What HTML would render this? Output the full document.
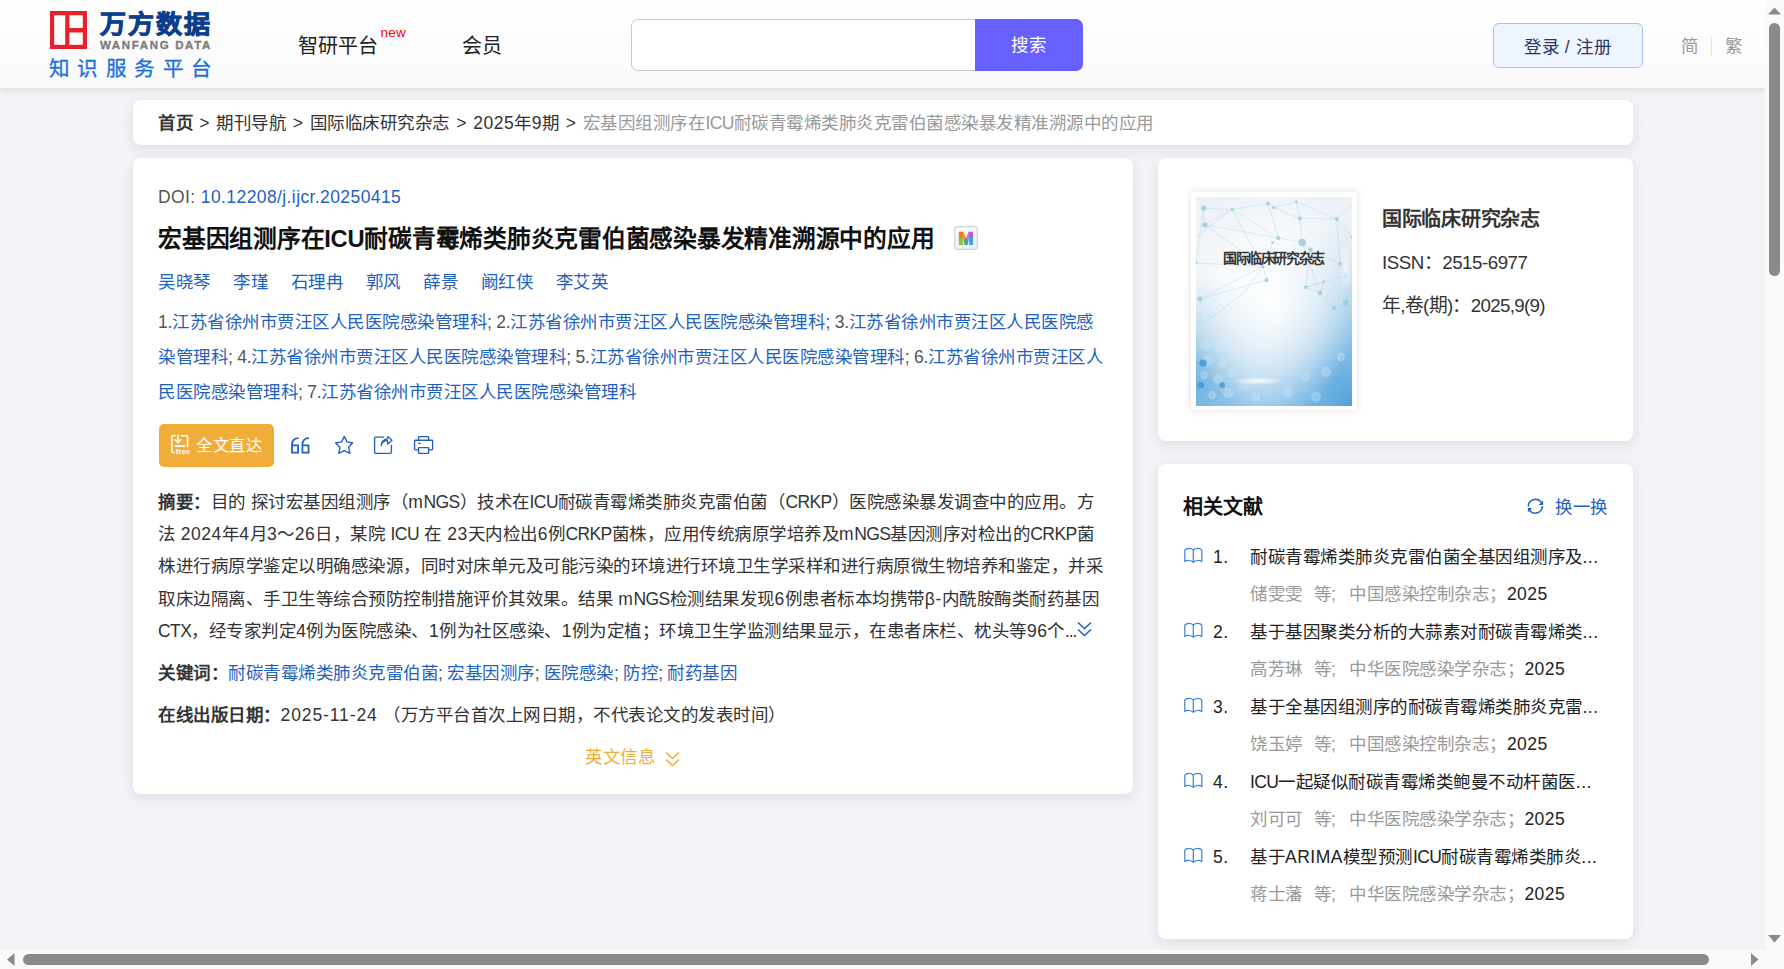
<!DOCTYPE html>
<html lang="zh-CN">
<head>
<meta charset="utf-8">
<title>万方数据</title>
<style>
*{box-sizing:border-box;margin:0;padding:0}
html,body{width:1784px;height:969px;overflow:hidden}
body{position:relative;background:#f2f3f7;font-family:"Liberation Sans",sans-serif;color:#333;font-size:17.5px;letter-spacing:0.5px}
.abs{position:absolute;white-space:nowrap}
/* header */
#hdr{position:absolute;left:0;top:0;width:1765px;height:88px;background:linear-gradient(#fff,#f9f9f9);box-shadow:0 2px 6px rgba(0,0,0,0.10);z-index:2}
.card{position:absolute;background:#fff;border-radius:8px;box-shadow:0 4px 13px rgba(20,30,50,0.09)}
.blue{color:#1f61c0}
.grey{color:#555}
.u{letter-spacing:-0.6px}
.n{letter-spacing:-0.25px}
/* scrollbars */
#vs{position:absolute;left:1765px;top:0;width:19px;height:969px;background:#fafafa;z-index:5}
#hs{position:absolute;left:0;top:950px;width:1765px;height:19px;background:#fafafa;z-index:5}
.thumb{position:absolute;background:#8a8a8a;border-radius:6px}
</style>
</head>
<body>
<div id="hdr">
  <!-- logo -->
  <svg class="abs" style="left:50px;top:11px" width="37" height="38" viewBox="0 0 37 38">
    <rect x="0" y="0" width="37" height="38" fill="#e8202a"/>
    <rect x="4.2" y="4.2" width="11" height="29.6" fill="#fff"/>
    <rect x="19.4" y="4.2" width="13.4" height="12.8" fill="#fff"/>
    <rect x="19.4" y="21.5" width="13.4" height="12.3" fill="#fff"/>
  </svg>
  <div class="abs" id="logo1" style="left:100px;top:9px;font-size:26px;line-height:32px;font-weight:900;color:#0b3e8c;letter-spacing:2px;-webkit-text-stroke:0.9px #0b3e8c;transform:scaleY(0.95);transform-origin:0 0">万方数据</div>
  <div class="abs" id="logo2" style="left:100px;top:39px;font-size:11.5px;line-height:12px;font-weight:bold;color:#7d7d7d;letter-spacing:1.65px;-webkit-text-stroke:0.35px #7d7d7d">WANFANG DATA</div>
  <div class="abs" id="logo3" style="left:49px;top:56px;font-size:20.5px;line-height:26px;color:#1b6fe0;letter-spacing:8.4px;-webkit-text-stroke:0.3px #1b6fe0">知识服务平台</div>
  <div class="abs" id="nav1" style="left:298px;top:32px;letter-spacing:0;font-size:20px;line-height:28px;color:#222">智研平台</div>
  <div class="abs" id="navnew" style="left:380.5px;letter-spacing:0.2px;top:24.5px;font-size:13.5px;line-height:16px;color:#f00">new</div>
  <div class="abs" id="nav2" style="left:461.5px;top:32px;letter-spacing:0;font-size:20px;line-height:28px;color:#222">会员</div>
  <!-- search -->
  <div class="abs" style="left:631px;top:19px;width:352px;height:52px;border:1px solid #c8c8c8;border-radius:7px;background:#fff"></div>
  <div class="abs" style="left:975px;top:19px;width:108px;height:52px;border-radius:0 7px 7px 0;background:#675ffe"></div>
  <div class="abs" id="srch" style="left:1011px;top:32px;font-size:17.5px;line-height:26px;color:#fff">搜索</div>
  <!-- login -->
  <div class="abs" style="left:1493px;top:23px;width:150px;height:45px;border:1px solid #a9c2ea;border-radius:6px;background:#eef5fe"></div>
  <div class="abs" id="login" style="left:1524px;top:34px;word-spacing:0.5px;font-size:17.5px;line-height:26px;color:#2a3563">登录 / 注册</div>
  <div class="abs" id="jian" style="left:1681px;top:33px;font-size:17.5px;line-height:26px;color:#9a9a9a">简</div>
  <div class="abs" style="left:1711px;top:37px;width:1px;height:20px;background:#e2e2e2"></div>
  <div class="abs" id="fan" style="left:1725px;top:33px;font-size:17.5px;line-height:26px;color:#9a9a9a">繁</div>
</div>

<!-- breadcrumb -->
<div class="card" style="left:133px;top:100px;width:1500px;height:45px"></div>
<div class="abs" id="crumb" style="word-spacing:1px;left:158px;top:110px;font-size:17.5px;line-height:26px;color:#333"><b style="font-weight:bold">首页</b> &gt; 期刊导航 &gt; 国际临床研究杂志 &gt; 2025年9期 &gt; <span style="color:#999">宏基因组测序在<span class="u">ICU</span>耐碳青霉烯类肺炎克雷伯菌感染暴发精准溯源中的应用</span></div>

<!-- main card -->
<div class="card" style="left:133px;top:158px;width:1000px;height:636px"></div>
<div class="abs" id="doi" style="letter-spacing:0.4px;left:158px;top:184px;font-size:17.5px;line-height:26px;color:#555">DOI: <span class="blue">10.12208/j.ijcr.20250415</span></div>
<div class="abs" id="title" style="left:158px;top:223px;font-size:23.75px;letter-spacing:-0.25px;line-height:32px;font-weight:bold;color:#111">宏基因组测序在ICU耐碳青霉烯类肺炎克雷伯菌感染暴发精准溯源中的应用</div>
<svg class="abs" style="left:954px;top:226px" width="24" height="24" viewBox="0 0 24 24">
 <defs><linearGradient id="mbg" x1="0" y1="0" x2="0" y2="1"><stop offset="0" stop-color="#fbfcfe"/><stop offset="1" stop-color="#e9f0fa"/></linearGradient>
 <clipPath id="mc"><path d="M4.8 18.9V5.8H9.6L12 12L14.4 5.8H19.1V18.9H15.1V12.4L13.6 18.9H10.4L8.9 12.4V18.9Z"/></clipPath></defs>
 <rect x="0.7" y="0.7" width="22.6" height="22.6" rx="2.5" fill="url(#mbg)" stroke="#cfd3d8" stroke-width="1.2"/>
 <g clip-path="url(#mc)">
  <rect x="4" y="5" width="5.6" height="7" fill="#f77a12"/><rect x="4" y="12" width="5.6" height="7.5" fill="#8dc63a"/>
  <rect x="9.6" y="5" width="4.8" height="8" fill="#e5806a"/><rect x="9.6" y="13" width="4.8" height="6.5" fill="#4ba49c"/>
  <rect x="14.4" y="5" width="5.2" height="7" fill="#b060d8"/><rect x="14.4" y="12" width="5.2" height="7.5" fill="#3f9fe8"/>
 </g>
</svg>
<div class="abs blue" id="authors" style="left:158px;top:268.5px;font-size:17.5px;line-height:26px">
<span style="margin-right:22.5px">吴晓琴</span><span style="margin-right:22.5px">李瑾</span><span style="margin-right:22.5px">石理冉</span><span style="margin-right:22.5px">郭风</span><span style="margin-right:22.5px">薛景</span><span style="margin-right:22.5px">阚红侠</span><span>李艾英</span></div>
<div class="abs" id="aff" style="word-spacing:-1.5px;left:158px;top:305px;font-size:17.5px;line-height:35.2px;color:#555">
<div><span class="n">1.</span><span class="blue">江苏省徐州市贾汪区人民医院感染管理科</span>; <span class="n">2.</span><span class="blue">江苏省徐州市贾汪区人民医院感染管理科</span>; <span class="n">3.</span><span class="blue">江苏省徐州市贾汪区人民医院感</span></div>
<div><span class="blue">染管理科</span>; <span class="n">4.</span><span class="blue">江苏省徐州市贾汪区人民医院感染管理科</span>; <span class="n">5.</span><span class="blue">江苏省徐州市贾汪区人民医院感染管理科</span>; <span class="n">6.</span><span class="blue">江苏省徐州市贾汪区人</span></div>
<div><span class="blue">民医院感染管理科</span>; <span class="n">7.</span><span class="blue">江苏省徐州市贾汪区人民医院感染管理科</span></div>
</div>
<!-- action bar -->
<div class="abs" style="left:159px;top:424px;width:115px;height:43px;border-radius:5px;background:#f0ad3a"></div>
<svg class="abs" style="left:165px;top:430px" width="35" height="30" viewBox="0 0 35 30" fill="none" stroke="#fff" stroke-width="1.6" stroke-linecap="round">
 <path d="M9.9 5.8H7.6Q6.9 5.8 6.9 6.5V21.8Q6.9 22.5 7.6 22.5H9"/><path d="M16.3 5.8H21.8Q22.6 5.8 22.6 6.6V16.5"/>
 <path d="M13 5.4V12.2"/><path d="M10.2 9.8L13 12.6L15.8 9.8" stroke-linejoin="round"/><path d="M10.4 16.1H19.4"/>
 <text x="10.8" y="24.3" font-size="8" font-weight="bold" fill="#fff" stroke="none" font-family="Liberation Sans" letter-spacing="0">free</text>
</svg>
<div class="abs" id="qw" style="left:196px;top:432px;font-size:16.25px;line-height:26px;color:#fff">全文直达</div>
<svg class="abs" style="left:290px;top:436px" width="21" height="18" viewBox="0 0 21 18" fill="none" stroke="#1f61c0" stroke-width="1.8">
 <path d="M8.6 2.1C4.4 2.1 2.0 4.5 2.0 8.5V16.6H8.1V9.4H2.0"/><path d="M19 2.1C14.8 2.1 12.4 4.5 12.4 8.5V16.6H18.5V9.4H12.4"/>
</svg>
<svg class="abs" style="left:325px;top:430px" width="115" height="30" viewBox="0 0 115 30" fill="none" stroke="#1f61c0" stroke-width="1.35" stroke-linejoin="round">
 <path d="M19.3 6.4L22 11.9L27.6 13L23.6 17.3L24.9 23.3L19.3 20.6L13.7 23.3L15 17.3L10.6 13L16.6 11.9Z"/>
 <path d="M59 7.1H50.6Q49.6 7.1 49.6 8.1V22.3Q49.6 23.3 50.6 23.3H65.4Q66.4 23.3 66.4 22.3V14.9"/>
 <path d="M56.2 15.6C56.8 12.2 59.2 10.6 62.6 10.6V14.2L67 10.2L62.8 6.4V8.8C58.8 9 56.6 11.6 56.2 15.6Z" stroke-width="1.2"/>
 <path d="M93.6 10.2V7.2Q93.6 6.6 94.2 6.6H103Q103.6 6.6 103.6 7.2V10.2"/>
 <path d="M93.6 19.8H90.4Q89.6 19.8 89.6 19V11Q89.6 10.2 90.4 10.2H106.8Q107.6 10.2 107.6 11V19Q107.6 19.8 106.8 19.8H103.6"/>
 <path d="M93.6 17.6H103.6V22.8Q103.6 23.4 103 23.4H94.2Q93.6 23.4 93.6 22.8Z"/>
 <path d="M93.2 13.3H95.8" stroke-width="1.2"/>
</svg>
<!-- abstract -->
<div class="abs" id="abs" style="left:158px;top:485.5px;font-size:17.5px;line-height:32.4px;color:#333">
<div><b>摘要：</b>目的 探讨宏基因组测序（m<span class="u">NGS</span>）技术在<span class="u">ICU</span>耐碳青霉烯类肺炎克雷伯菌（<span class="u">CRKP</span>）医院感染暴发调查中的应用。方</div>
<div>法 2024年4月3～26日，某院 <span class="u">ICU</span> 在 23天内检出6例<span class="u">CRKP</span>菌株，应用传统病原学培养及m<span class="u">NGS</span>基因测序对检出的<span class="u">CRKP</span>菌</div>
<div>株进行病原学鉴定以明确感染源，同时对床单元及可能污染的环境进行环境卫生学采样和进行病原微生物培养和鉴定，并采</div>
<div>取床边隔离、手卫生等综合预防控制措施评价其效果。结果 m<span class="u">NGS</span>检测结果发现6例患者标本均携带β-内酰胺酶类耐药基因</div>
<div><span class="u">CTX</span>，经专家判定4例为医院感染、1例为社区感染、1例为定植；环境卫生学监测结果显示，在患者床栏、枕头等96个<span style="letter-spacing:-1px">...</span></div>
</div>
<svg class="abs" style="left:1077px;top:621px" width="15" height="16" viewBox="0 0 15 16" fill="none" stroke="#1f61c0" stroke-width="1.6">
 <path d="M1 1.5L7.5 7.5L14 1.5"/><path d="M1 8.5L7.5 14.5L14 8.5"/>
</svg>
<div class="abs" id="kw" style="word-spacing:-1.5px;left:158px;top:659.5px;font-size:17.5px;line-height:26px;color:#555"><b style="color:#333">关键词：</b><span class="blue">耐碳青霉烯类肺炎克雷伯菌</span>; <span class="blue">宏基因测序</span>; <span class="blue">医院感染</span>; <span class="blue">防控</span>; <span class="blue">耐药基因</span></div>
<div class="abs" id="pub" style="left:158px;top:702px;font-size:17.5px;line-height:26px;color:#333"><b>在线出版日期：</b><span style="letter-spacing:0.9px">2025-11-24</span> （万方平台首次上网日期，不代表论文的发表时间）</div>
<div class="abs" id="eng" style="left:585px;top:744px;font-size:17.5px;line-height:26px;color:#f0ad3a">英文信息</div>
<svg class="abs" style="left:665px;top:751px" width="15" height="16" viewBox="0 0 15 16" fill="none" stroke="#f0ad3a" stroke-width="1.6">
 <path d="M1 1.5L7.5 7.5L14 1.5"/><path d="M1 8.5L7.5 14.5L14 8.5"/>
</svg>

<!-- right cards -->
<div class="card" style="left:1158px;top:158px;width:475px;height:283px"></div>
<div class="abs" style="left:1191px;top:192px;width:166px;height:218px;background:#fff;box-shadow:0 0 8px rgba(0,0,0,0.12)"></div>
<svg class="abs" style="left:1196px;top:197px" width="156" height="209" viewBox="0 0 156 209">
 <defs>
  <linearGradient id="cg" x1="0" y1="0" x2="0" y2="1">
   <stop offset="0" stop-color="#eef2f7"/><stop offset="0.4" stop-color="#f1f4f8"/><stop offset="0.7" stop-color="#d6e7f4"/><stop offset="1" stop-color="#9ccaea"/>
  </linearGradient>
  <radialGradient id="cw" cx="0.48" cy="0.5" r="0.55"><stop offset="0" stop-color="#fff" stop-opacity="0.95"/><stop offset="0.6" stop-color="#fff" stop-opacity="0.5"/><stop offset="1" stop-color="#fff" stop-opacity="0"/></radialGradient>
  <radialGradient id="cbr" cx="1" cy="1" r="0.9"><stop offset="0" stop-color="#4d9fda" stop-opacity="0.95"/><stop offset="0.55" stop-color="#7ab8e4" stop-opacity="0.5"/><stop offset="1" stop-color="#9cc9ea" stop-opacity="0"/></radialGradient>
  <radialGradient id="cbl" cx="0" cy="0.9" r="0.55"><stop offset="0" stop-color="#5aa7dc" stop-opacity="0.75"/><stop offset="1" stop-color="#9cc9ea" stop-opacity="0"/></radialGradient>
  <radialGradient id="cs" cx="0.5" cy="0.5" r="0.5"><stop offset="0" stop-color="#fff" stop-opacity="0.95"/><stop offset="1" stop-color="#fff" stop-opacity="0"/></radialGradient>
 </defs>
 <rect width="156" height="209" fill="url(#cg)"/>
 <rect width="156" height="209" fill="url(#cbr)"/>
 <rect width="156" height="209" fill="url(#cbl)"/>
 <rect width="156" height="209" fill="url(#cw)"/>
 <g fill="none" stroke="#ffffff" stroke-opacity="0.3" stroke-width="0.7"><polygon points="17.0,120.0 14.5,124.3 9.5,124.3 7.0,120.0 9.5,115.7 14.5,115.7"/><polygon points="9.5,132.0 7.2,135.9 2.8,135.9 0.5,132.0 2.7,128.1 7.2,128.1"/><polygon points="24.5,134.0 22.2,137.9 17.8,137.9 15.5,134.0 17.8,130.1 22.2,130.1"/><polygon points="14.0,148.0 11.5,152.3 6.5,152.3 4.0,148.0 6.5,143.7 11.5,143.7"/><polygon points="28.0,150.0 26.0,153.5 22.0,153.5 20.0,150.0 22.0,146.5 26.0,146.5"/><polygon points="17.0,163.0 14.5,167.3 9.5,167.3 7.0,163.0 9.5,158.7 14.5,158.7"/><polygon points="30.0,166.0 28.0,169.5 24.0,169.5 22.0,166.0 24.0,162.5 28.0,162.5"/><polygon points="42.0,160.0 40.0,163.5 36.0,163.5 34.0,160.0 36.0,156.5 40.0,156.5"/><polygon points="12.0,178.0 10.0,181.5 6.0,181.5 4.0,178.0 6.0,174.5 10.0,174.5"/><polygon points="27.0,182.0 24.5,186.3 19.5,186.3 17.0,182.0 19.5,177.7 24.5,177.7"/><polygon points="40.0,176.0 38.0,179.5 34.0,179.5 32.0,176.0 34.0,172.5 38.0,172.5"/><polygon points="53.0,188.0 50.5,192.3 45.5,192.3 43.0,188.0 45.5,183.7 50.5,183.7"/><polygon points="37.0,196.0 34.5,200.3 29.5,200.3 27.0,196.0 29.5,191.7 34.5,191.7"/><polygon points="20.0,198.0 18.0,201.5 14.0,201.5 12.0,198.0 14.0,194.5 18.0,194.5"/><polygon points="64.0,200.0 62.0,203.5 58.0,203.5 56.0,200.0 58.0,196.5 62.0,196.5"/><polygon points="97.0,195.0 94.5,199.3 89.5,199.3 87.0,195.0 89.5,190.7 94.5,190.7"/><polygon points="114.0,180.0 112.0,183.5 108.0,183.5 106.0,180.0 108.0,176.5 112.0,176.5"/><polygon points="135.0,175.0 132.5,179.3 127.5,179.3 125.0,175.0 127.5,170.7 132.5,170.7"/><polygon points="125.0,200.0 122.5,204.3 117.5,204.3 115.0,200.0 117.5,195.7 122.5,195.7"/><polygon points="149.0,160.0 147.0,163.5 143.0,163.5 141.0,160.0 143.0,156.5 147.0,156.5"/></g>
 <g fill="#cfe6f6" fill-opacity="0.35"><polygon points="17.0,120.0 14.5,124.3 9.5,124.3 7.0,120.0 9.5,115.7 14.5,115.7"/><polygon points="9.5,132.0 7.2,135.9 2.8,135.9 0.5,132.0 2.7,128.1 7.2,128.1"/><polygon points="24.5,134.0 22.2,137.9 17.8,137.9 15.5,134.0 17.8,130.1 22.2,130.1"/><polygon points="14.0,148.0 11.5,152.3 6.5,152.3 4.0,148.0 6.5,143.7 11.5,143.7"/><polygon points="28.0,150.0 26.0,153.5 22.0,153.5 20.0,150.0 22.0,146.5 26.0,146.5"/><polygon points="17.0,163.0 14.5,167.3 9.5,167.3 7.0,163.0 9.5,158.7 14.5,158.7"/><polygon points="30.0,166.0 28.0,169.5 24.0,169.5 22.0,166.0 24.0,162.5 28.0,162.5"/><polygon points="42.0,160.0 40.0,163.5 36.0,163.5 34.0,160.0 36.0,156.5 40.0,156.5"/><polygon points="12.0,178.0 10.0,181.5 6.0,181.5 4.0,178.0 6.0,174.5 10.0,174.5"/><polygon points="27.0,182.0 24.5,186.3 19.5,186.3 17.0,182.0 19.5,177.7 24.5,177.7"/><polygon points="40.0,176.0 38.0,179.5 34.0,179.5 32.0,176.0 34.0,172.5 38.0,172.5"/><polygon points="53.0,188.0 50.5,192.3 45.5,192.3 43.0,188.0 45.5,183.7 50.5,183.7"/><polygon points="37.0,196.0 34.5,200.3 29.5,200.3 27.0,196.0 29.5,191.7 34.5,191.7"/><polygon points="20.0,198.0 18.0,201.5 14.0,201.5 12.0,198.0 14.0,194.5 18.0,194.5"/><polygon points="64.0,200.0 62.0,203.5 58.0,203.5 56.0,200.0 58.0,196.5 62.0,196.5"/><polygon points="97.0,195.0 94.5,199.3 89.5,199.3 87.0,195.0 89.5,190.7 94.5,190.7"/><polygon points="114.0,180.0 112.0,183.5 108.0,183.5 106.0,180.0 108.0,176.5 112.0,176.5"/><polygon points="135.0,175.0 132.5,179.3 127.5,179.3 125.0,175.0 127.5,170.7 132.5,170.7"/><polygon points="125.0,200.0 122.5,204.3 117.5,204.3 115.0,200.0 117.5,195.7 122.5,195.7"/><polygon points="149.0,160.0 147.0,163.5 143.0,163.5 141.0,160.0 143.0,156.5 147.0,156.5"/></g>
 <g fill="#3d92d6" fill-opacity="0.75"><polygon points="11.2,166.0 9.1,169.6 4.9,169.6 2.8,166.0 4.9,162.4 9.1,162.4"/><polygon points="8.6,188.0 6.8,191.1 3.2,191.1 1.4,188.0 3.2,184.9 6.8,184.9"/><polygon points="29.2,188.0 27.6,190.8 24.4,190.8 22.8,188.0 24.4,185.2 27.6,185.2"/></g>
 <g stroke="#a6d3de" stroke-width="0.5" fill="none" opacity="0.7"><path d="M7.6 11.2L36 12.4"/><path d="M36 12.4L72 6.4"/><path d="M72 6.4L77.7 10.5"/><path d="M77.7 10.5L100.2 4.8"/><path d="M100.2 4.8L103.8 21.4"/><path d="M7.6 11.2L8.8 27.8"/><path d="M36 12.4L8.8 27.8"/><path d="M36 12.4L82.4 40.9"/><path d="M8.8 27.8L82.4 40.9"/><path d="M72 6.4L82.4 40.9"/><path d="M77.7 10.5L103.8 21.4"/><path d="M103.8 21.4L140.6 21.9"/><path d="M100.2 4.8L140.6 21.9"/><path d="M103.8 21.4L106.2 45.6"/><path d="M82.4 40.9L106.2 45.6"/><path d="M82.4 40.9L76.5 45.6"/><path d="M76.5 45.6L67 69.4"/><path d="M8.8 27.8L67 69.4"/><path d="M106.2 45.6L114.5 52.7"/><path d="M114.5 52.7L144.2 67"/><path d="M144.2 67L140.6 21.9"/><path d="M140.6 21.9L156 40"/><path d="M114.5 52.7L109.7 90.3"/><path d="M109.7 90.3L127.6 84.8"/><path d="M127.6 84.8L124 96"/><path d="M109.7 90.3L124 96"/><path d="M144.2 67L150 78.9"/><path d="M150 78.9L150 106"/><path d="M150 106L138 110.9"/><path d="M124 96L138 110.9"/><path d="M67 69.4L0 66"/><path d="M0 66L7.6 11.2"/><path d="M4 102L67 69.4"/><path d="M4 102L70.5 83.1"/><path d="M70.5 83.1L67 69.4"/><path d="M109.7 90.3L150 78.9"/><path d="M138 110.9L153.7 125"/><path d="M150 106L153.7 125"/><path d="M106.2 45.6L124 96"/><path d="M36 12.4L67 69.4"/><path d="M0 132L48 96L67 69.4"/><path d="M156 8L140.6 21.9"/><path d="M0 40L36 12.4"/></g>
 <g fill="#9fd0dc" opacity="0.9"><circle cx="7.6" cy="11.2" r="2.6"/><circle cx="36" cy="12.4" r="1.6"/><circle cx="72" cy="6.4" r="1.8"/><circle cx="77.7" cy="10.5" r="1.6"/><circle cx="100.2" cy="4.8" r="1.4"/><circle cx="103.8" cy="21.4" r="2.0"/><circle cx="140.6" cy="21.9" r="2.0"/><circle cx="8.8" cy="27.8" r="2.6"/><circle cx="82.4" cy="40.9" r="2.0"/><circle cx="76.5" cy="45.6" r="1.3"/><circle cx="106.2" cy="45.6" r="3.8"/><circle cx="114.5" cy="52.7" r="2.2"/><circle cx="67" cy="69.4" r="1.5"/><circle cx="70.5" cy="83.1" r="2.2"/><circle cx="109.7" cy="90.3" r="2.0"/><circle cx="127.6" cy="84.8" r="1.4"/><circle cx="124" cy="96" r="2.2"/><circle cx="144.2" cy="67" r="2.0"/><circle cx="150" cy="78.9" r="2.0"/><circle cx="4" cy="102" r="2.4"/><circle cx="150" cy="106" r="3.2"/><circle cx="138" cy="110.9" r="2.2"/><circle cx="153.7" cy="125" r="1.6"/><circle cx="0" cy="66" r="1.5"/><circle cx="156" cy="40" r="1.5"/></g>
 <ellipse cx="62" cy="184" rx="26" ry="4" fill="url(#cs)"/>
 <ellipse cx="150" cy="70" rx="6" ry="26" fill="url(#cs)" opacity="0.7"/>
</svg>
<div class="abs" id="cov" style="left:1223px;top:248px;font-size:14px;line-height:20px;font-weight:bold;color:#333;letter-spacing:-1.4px">国际临床研究杂志</div>
<div class="abs" id="jname" style="left:1382px;top:205px;font-size:20px;line-height:28px;font-weight:bold;color:#333;letter-spacing:-0.3px">国际临床研究杂志</div>
<div class="abs" id="issn" style="left:1382px;top:250px;font-size:18.75px;line-height:26px;color:#333;letter-spacing:-0.5px">ISSN：2515-6977</div>
<div class="abs" id="vol" style="left:1382px;top:292.5px;font-size:18.75px;line-height:26px;color:#333;letter-spacing:-0.7px">年,卷(期)：2025,9(9)</div>
<div class="card" style="left:1158px;top:464px;width:475px;height:475px"></div>
<div class="abs" id="rel" style="left:1183px;top:493px;font-size:20px;line-height:28px;font-weight:bold;color:#111;letter-spacing:-0.1px">相关文献</div>
<svg class="abs" style="left:1520px;top:492px" width="30" height="28" viewBox="0 0 30 28">
 <g fill="none" stroke="#1f61c0" stroke-width="1.4"><path d="M8.3 14.6A7.1 7.1 0 0 1 21.2 10.4"/><path d="M22.3 13.9A7.1 7.1 0 0 1 9.4 18.1"/></g>
 <g fill="#1f61c0"><path d="M23 8.6V12.9H18.7Z"/><path d="M7.9 20.2V15.9H12.2Z"/></g>
</svg>
<div class="abs blue" id="hyh" style="left:1555px;top:493px;font-size:17.5px;line-height:28px">换一换</div>
<svg class="abs" style="left:1178px;top:542px" width="30" height="28" viewBox="0 0 30 28" fill="none" stroke="#3f84e4" stroke-width="1.25" stroke-linejoin="round">
 <path d="M15.3 8C14 6.8 12.5 6.4 11 6.4C9 6.4 7.6 7 6.8 8.2V19.6C7.8 18.8 9.3 18.4 11 18.5C12.8 18.6 14.2 19.3 15.3 20.4C16.4 19.3 17.8 18.6 19.6 18.5C21.3 18.4 22.8 18.8 23.8 19.6V8.2C23 7 21.6 6.4 19.6 6.4C18.1 6.4 16.6 6.8 15.3 8ZM15.3 8V20.4"/>
</svg>
<div class="abs" style="left:1213px;top:544px;font-size:17.5px;line-height:26px;color:#222">1.</div>
<div class="abs" style="left:1250px;top:544px;font-size:17.5px;line-height:26px;color:#222">耐碳青霉烯类肺炎克雷伯菌全基因组测序及...</div>
<div class="abs" style="left:1250px;top:581px;font-size:17.5px;line-height:26px;color:#999">储雯雯<span style="margin-left:11px">等;</span><span style="margin-left:13px">中国感染控制杂志</span>；<span style="color:#222">2025</span></div>
<svg class="abs" style="left:1178px;top:617px" width="30" height="28" viewBox="0 0 30 28" fill="none" stroke="#3f84e4" stroke-width="1.25" stroke-linejoin="round">
 <path d="M15.3 8C14 6.8 12.5 6.4 11 6.4C9 6.4 7.6 7 6.8 8.2V19.6C7.8 18.8 9.3 18.4 11 18.5C12.8 18.6 14.2 19.3 15.3 20.4C16.4 19.3 17.8 18.6 19.6 18.5C21.3 18.4 22.8 18.8 23.8 19.6V8.2C23 7 21.6 6.4 19.6 6.4C18.1 6.4 16.6 6.8 15.3 8ZM15.3 8V20.4"/>
</svg>
<div class="abs" style="left:1213px;top:619px;font-size:17.5px;line-height:26px;color:#222">2.</div>
<div class="abs" style="left:1250px;top:619px;font-size:17.5px;line-height:26px;color:#222">基于基因聚类分析的大蒜素对耐碳青霉烯类...</div>
<div class="abs" style="left:1250px;top:656px;font-size:17.5px;line-height:26px;color:#999">高芳琳<span style="margin-left:11px">等;</span><span style="margin-left:13px">中华医院感染学杂志</span>；<span style="color:#222">2025</span></div>
<svg class="abs" style="left:1178px;top:692px" width="30" height="28" viewBox="0 0 30 28" fill="none" stroke="#3f84e4" stroke-width="1.25" stroke-linejoin="round">
 <path d="M15.3 8C14 6.8 12.5 6.4 11 6.4C9 6.4 7.6 7 6.8 8.2V19.6C7.8 18.8 9.3 18.4 11 18.5C12.8 18.6 14.2 19.3 15.3 20.4C16.4 19.3 17.8 18.6 19.6 18.5C21.3 18.4 22.8 18.8 23.8 19.6V8.2C23 7 21.6 6.4 19.6 6.4C18.1 6.4 16.6 6.8 15.3 8ZM15.3 8V20.4"/>
</svg>
<div class="abs" style="left:1213px;top:694px;font-size:17.5px;line-height:26px;color:#222">3.</div>
<div class="abs" style="left:1250px;top:694px;font-size:17.5px;line-height:26px;color:#222">基于全基因组测序的耐碳青霉烯类肺炎克雷...</div>
<div class="abs" style="left:1250px;top:731px;font-size:17.5px;line-height:26px;color:#999">饶玉婷<span style="margin-left:11px">等;</span><span style="margin-left:13px">中国感染控制杂志</span>；<span style="color:#222">2025</span></div>
<svg class="abs" style="left:1178px;top:767px" width="30" height="28" viewBox="0 0 30 28" fill="none" stroke="#3f84e4" stroke-width="1.25" stroke-linejoin="round">
 <path d="M15.3 8C14 6.8 12.5 6.4 11 6.4C9 6.4 7.6 7 6.8 8.2V19.6C7.8 18.8 9.3 18.4 11 18.5C12.8 18.6 14.2 19.3 15.3 20.4C16.4 19.3 17.8 18.6 19.6 18.5C21.3 18.4 22.8 18.8 23.8 19.6V8.2C23 7 21.6 6.4 19.6 6.4C18.1 6.4 16.6 6.8 15.3 8ZM15.3 8V20.4"/>
</svg>
<div class="abs" style="left:1213px;top:769px;font-size:17.5px;line-height:26px;color:#222">4.</div>
<div class="abs" style="left:1250px;top:769px;font-size:17.5px;line-height:26px;color:#222"><span class="u">ICU</span>一起疑似耐碳青霉烯类鲍曼不动杆菌医...</div>
<div class="abs" style="left:1250px;top:806px;font-size:17.5px;line-height:26px;color:#999">刘可可<span style="margin-left:11px">等;</span><span style="margin-left:13px">中华医院感染学杂志</span>；<span style="color:#222">2025</span></div>
<svg class="abs" style="left:1178px;top:842px" width="30" height="28" viewBox="0 0 30 28" fill="none" stroke="#3f84e4" stroke-width="1.25" stroke-linejoin="round">
 <path d="M15.3 8C14 6.8 12.5 6.4 11 6.4C9 6.4 7.6 7 6.8 8.2V19.6C7.8 18.8 9.3 18.4 11 18.5C12.8 18.6 14.2 19.3 15.3 20.4C16.4 19.3 17.8 18.6 19.6 18.5C21.3 18.4 22.8 18.8 23.8 19.6V8.2C23 7 21.6 6.4 19.6 6.4C18.1 6.4 16.6 6.8 15.3 8ZM15.3 8V20.4"/>
</svg>
<div class="abs" style="left:1213px;top:844px;font-size:17.5px;line-height:26px;color:#222">5.</div>
<div class="abs" style="left:1250px;top:844px;font-size:17.5px;line-height:26px;color:#222">基于ARIMA模型预测<span class="u">ICU</span>耐碳青霉烯类肺炎...</div>
<div class="abs" style="left:1250px;top:881px;font-size:17.5px;line-height:26px;color:#999">蒋士藩<span style="margin-left:11px">等;</span><span style="margin-left:13px">中华医院感染学杂志</span>；<span style="color:#222">2025</span></div>

<!-- scrollbars -->
<div id="vs">
  <svg class="abs" style="left:3px;top:7px" width="13" height="8" viewBox="0 0 13 8"><path d="M6.5 0.5L13 7.5H0Z" fill="#8a8a8a"/></svg>
  <div class="thumb" style="left:4px;top:23px;width:11px;height:253px"></div>
  <svg class="abs" style="left:3px;top:935px" width="13" height="8" viewBox="0 0 13 8"><path d="M0 0H13L6.5 7.5Z" fill="#8a8a8a"/></svg>
</div>
<div id="hs">
  <svg class="abs" style="left:7px;top:3px" width="8" height="13" viewBox="0 0 8 13"><path d="M7.5 0V13L0 6.5Z" fill="#8a8a8a"/></svg>
  <div class="thumb" style="left:23px;top:4px;width:1686px;height:11px"></div>
  <svg class="abs" style="left:1751px;top:3px" width="8" height="13" viewBox="0 0 8 13"><path d="M0 0L7.5 6.5L0 13Z" fill="#8a8a8a"/></svg>
</div>
</body>
</html>
